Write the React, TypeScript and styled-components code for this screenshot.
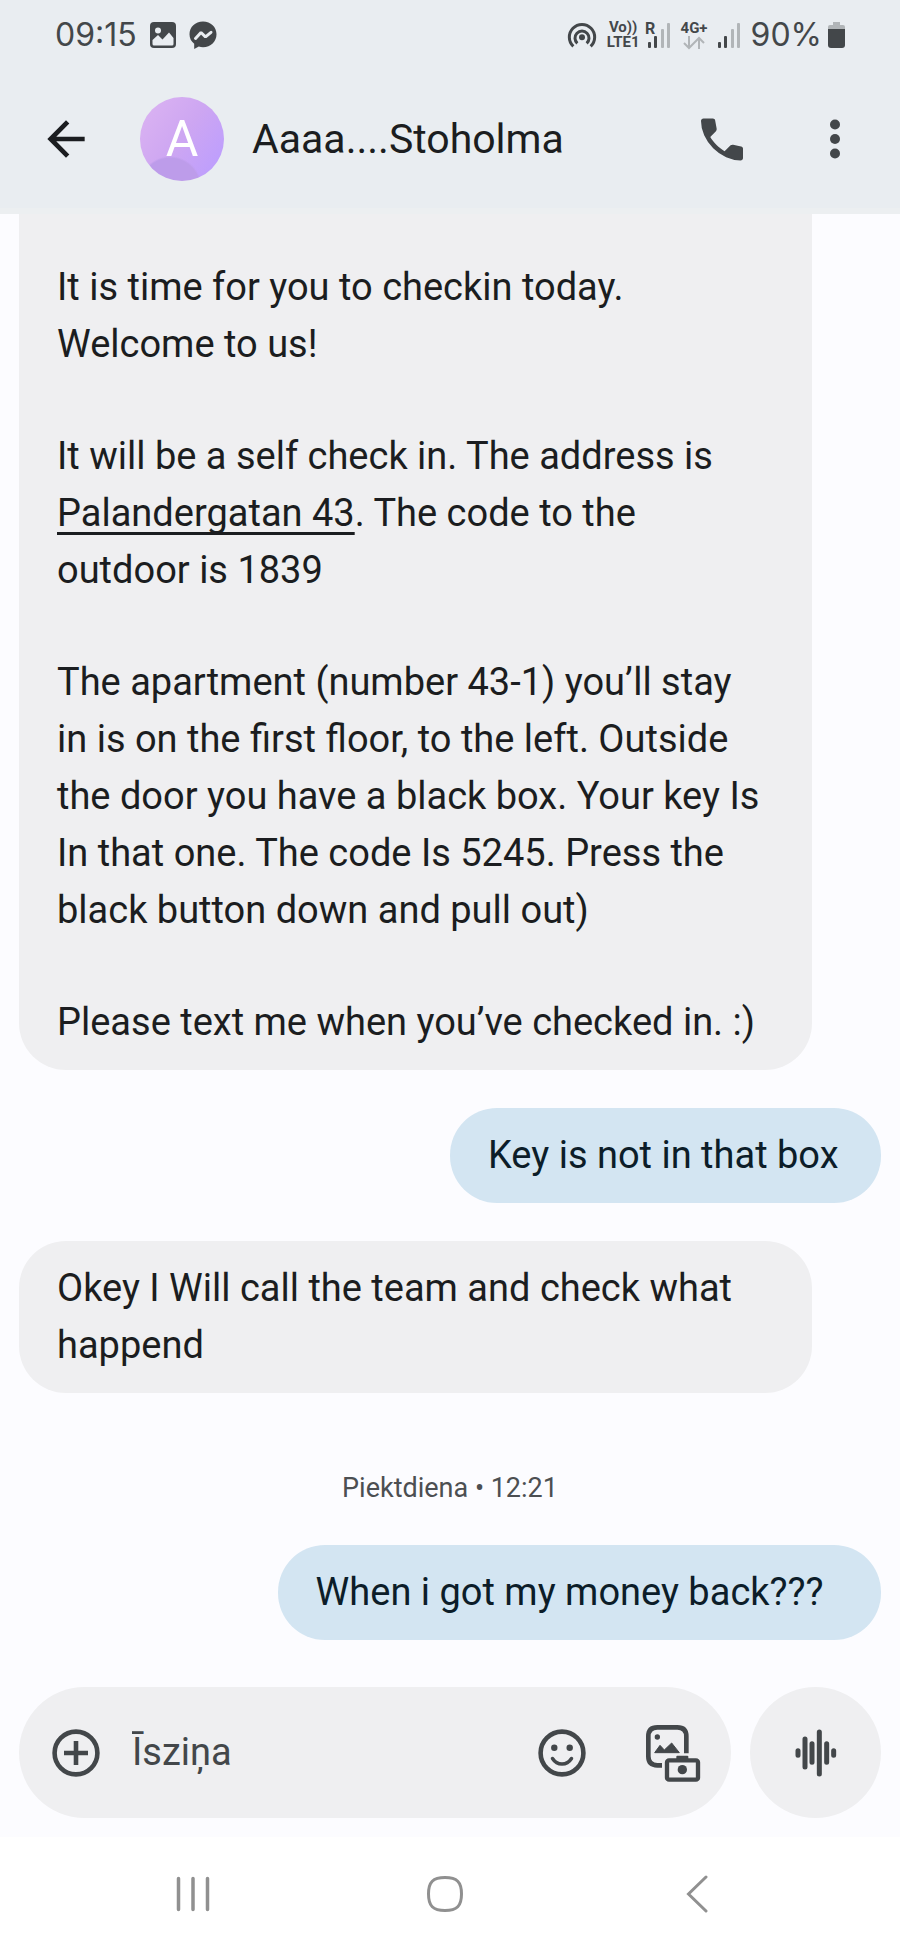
import React from 'react';
import styled, { createGlobalStyle } from 'styled-components';

const ink = '#1b1d20';
const icon = '#43474a';
const faint = '#b1b5b8';
const surface = '#fcfcff';
const bubble = '#efeff1';

const GlobalStyle = createGlobalStyle`
  * {
    box-sizing: border-box;
  }
  body {
    margin: 0;
    background: ${surface};
    color: ${ink};
    font-family: Roboto, 'Noto Sans', sans-serif;
  }
`;

const Screen = styled.div`
  display: flex;
  flex-direction: column;
  min-height: 100vh;
`;

const Header = styled.header`
  background: #e9edf1;
  border-bottom: 6px solid #eceff1;
`;

const StatusBar = styled.div`
  display: flex;
  align-items: center;
  justify-content: space-between;
  height: 70px;
  padding: 0 54px 0 55px;
  color: ${icon};
`;

const StatusGroup = styled.div<{ $gap: number }>`
  display: flex;
  align-items: center;
  gap: ${(p) => p.$gap}px;
`;

const StatusText = styled.span`
  font-family: Inter, Roboto, sans-serif;
  font-size: 32px;
  line-height: 38px;
`;

const Network = styled.div`
  display: flex;
  flex-direction: column;
  align-items: center;
  font-size: 15px;
  font-weight: 700;
  line-height: 15px;
`;

const AppBar = styled.div`
  display: flex;
  align-items: center;
  height: 138px;
  padding: 0 37px 0 38px;
`;

const IconButton = styled.button<{ $size: number }>`
  display: flex;
  align-items: center;
  justify-content: center;
  flex: none;
  width: ${(p) => p.$size}px;
  height: ${(p) => p.$size}px;
  padding: 0;
  border: 0;
  background: none;
  color: ${icon};
`;

const BackButton = styled(IconButton)`
  margin-right: 46px;
  color: ${ink};
`;

const Avatar = styled.div`
  display: flex;
  align-items: center;
  justify-content: center;
  flex: none;
  width: 84px;
  height: 84px;
  border-radius: 50%;
  background:
    radial-gradient(circle at 36% 108%, #bd9cea 0 28%, transparent 30%),
    linear-gradient(125deg, #d8b0f2 15%, #cda6f2 50%, #bf9ffc 85%);
  color: #fff;
  font-size: 50px;
  line-height: 57px;
`;

const Title = styled.h1`
  flex: 1;
  margin: 0 0 0 28px;
  font-size: 41px;
  font-weight: 400;
  line-height: 57px;
`;

const AppActions = styled.div`
  display: flex;
  gap: 57px;
`;

const Thread = styled.main`
  display: flex;
  flex: 1;
  flex-direction: column;
  gap: 38px;
  padding: 0 19px;
`;

const Bubble = styled.div<{ $continued?: boolean }>`
  display: flex;
  flex-direction: column;
  gap: 55px;
  width: calc(100% - 69px);
  padding: ${(p) => (p.$continued ? '45px 38px 19px' : '19px 38px')};
  border-radius: ${(p) => (p.$continued ? '0 0 47px 47px' : '47px')};
  background: ${bubble};
`;

const SentBubble = styled(Bubble)<{ $share: number }>`
  align-self: flex-end;
  width: auto;
  min-width: ${(p) => p.$share}%;
  background: #d3e5f2;
  color: #0c1d29;
`;

const Paragraph = styled.p`
  margin: 0;
  font-size: 38px;
  line-height: 57px;
  white-space: pre-line;
`;

const AddressLink = styled.a`
  color: inherit;
  text-decoration: underline;
  text-decoration-skip-ink: none;
  text-decoration-thickness: 3px;
  text-underline-offset: 6px;
`;

const DateLabel = styled.time`
  margin-top: 38px;
  color: #4c4f52;
  font-size: 27px;
  line-height: 38px;
  text-align: center;
`;

const Composer = styled.form`
  display: flex;
  gap: 19px;
  padding: 45px 19px 19px;
`;

const InputPill = styled.div`
  display: flex;
  align-items: center;
  flex: 1;
  min-width: 0;
  height: 131px;
  padding: 0 28px 0 27px;
  border-radius: 66px;
  background: ${bubble};
`;

const MessageInput = styled.input`
  flex: 1;
  min-width: 0;
  margin: 0 26px;
  padding: 0;
  border: 0;
  outline: 0;
  background: none;
  color: ${ink};
  font: inherit;
  font-size: 38px;
  line-height: 57px;

  &::placeholder {
    color: ${icon};
    opacity: 1;
  }
`;

const InputActions = styled.div`
  display: flex;
  gap: 51px;
`;

const VoiceButton = styled(IconButton)`
  border-radius: 50%;
  background: ${bubble};
`;

const SystemNav = styled.nav`
  display: grid;
  grid-template-columns: repeat(3, 1fr);
  align-items: center;
  justify-items: center;
  height: 113px;
  padding: 0 77px 0 67px;
  background: #fff;
`;

const NavButton = styled(IconButton)`
  color: #909090;
`;

const SignalBars = ({ roaming }: { roaming?: boolean }) => (
  <svg width={27} height={36} viewBox="0 -4 27 36" aria-hidden="true">
    <rect x="4" y="21" width="3" height="6" rx="1" fill={icon} />
    <rect x="10" y="15" width="3" height="12" rx="1" fill={icon} />
    <rect x="17" y="8" width="3" height="19" rx="1" fill={faint} />
    <rect x="23" y="2" width="3" height="25" rx="1" fill={faint} />
    {roaming && (
      <text x="1" y="13" fontSize="16" fontWeight="700" fill={icon}>
        R
      </text>
    )}
  </svg>
);

export default function App() {
  return (
    <Screen>
      <GlobalStyle />
      <Header>
        <StatusBar>
          <StatusGroup $gap={12}>
            <StatusText>09:15</StatusText>
            <svg width={28} height={28} viewBox="0 0 28 28" aria-hidden="true">
              <rect x="1" y="1" width="26" height="26" rx="4" fill={icon} />
              <circle cx="9" cy="9.5" r="3" fill="#e9edf1" />
              <path d="M3.5 19 9 14l4.5 4.5 6.5-7 4.5 5.5V23a1.5 1.5 0 0 1-1.5 1.5H5A1.5 1.5 0 0 1 3.5 23z" fill="#e9edf1" />
            </svg>
            <svg width={28} height={28} viewBox="0 0 28 28" aria-hidden="true">
              <path d="M14 .5C6.2.5.5 6 .5 13.3c0 4 1.7 7.2 4.7 9.5v5.2l4.6-2.4c1.3.4 2.700.6 4.2.6 7.8 0 13.500-5.6 13.500-12.9S21.800.5 14 .5z" fill={icon} />
              <path d="M6.5 17.5 12 11.5l4.5 4.3 5.5-4.5" fill="none" stroke="#e9edf1" strokeWidth="3" strokeLinecap="round" strokeLinejoin="bevel" />
            </svg>
          </StatusGroup>
          <StatusGroup $gap={10}>
            <svg width={30} height={28} viewBox="0 0 90 84" fill="none" stroke={icon} strokeWidth="9" aria-hidden="true">
              <path d="M19 76A38 38 0 1 1 71 76" />
              <path d="M31 67A21 21 0 1 1 59 67" />
              <circle cx="45" cy="49" r="9" fill={icon} stroke="none" />
            </svg>
            <StatusGroup $gap={4}>
              <Network>
                <span>Vo))</span>
                <span>LTE1</span>
              </Network>
              <SignalBars roaming />
            </StatusGroup>
            <StatusGroup $gap={6}>
              <Network>
                <span>4G+</span>
                <svg width={22} height={14} viewBox="0 0 22 14" fill="none" stroke={faint} strokeWidth="2" aria-hidden="true">
                  <path d="M6 0v12M1 7l5 5 5-5M16 13V2M11 7l5-5 5 5" />
                </svg>
              </Network>
              <SignalBars />
            </StatusGroup>
            <StatusGroup $gap={5}>
              <StatusText>90%</StatusText>
              <svg width={19} height={28} viewBox="0 0 19 28" aria-hidden="true">
                <path d="M6 1h7v3h3a2 2 0 0 1 2 2v3H1V6a2 2 0 0 1 2-2h3z" fill={faint} />
                <path d="M1 8h17v16a3 3 0 0 1-3 3H4a3 3 0 0 1-3-3z" fill={icon} />
              </svg>
            </StatusGroup>
          </StatusGroup>
        </StatusBar>
        <AppBar>
          <BackButton $size={56} type="button" aria-label="Back">
            <svg width={56} height={56} viewBox="0 0 24 24" fill="currentColor">
              <path d="M7.825 13l5.6 5.6L12 20l-8-8 8-8 1.425 1.4-5.6 5.6H20v2z" />
            </svg>
          </BackButton>
          <Avatar>A</Avatar>
          <Title>Aaaa....Stoholma</Title>
          <AppActions>
            <IconButton $size={56} type="button" aria-label="Call">
              <svg width={57} height={57} viewBox="0 0 24 24" fill="currentColor">
                <path d="M19.95 21q-3.125 0-6.175-1.363t-5.55-3.862T4.363 10.225 3 4.05q0-.45.3-.75t.75-.3H8.1q.35 0 .625.238t.325.562l.65 3.5q.05.4-.025.675T9.4 8.45L6.975 10.9q.5.925 1.187 1.788t1.513 1.662q.775.775 1.625 1.438T13.1 17l2.35-2.35q.225-.225.588-.338t.712-.062l3.45.7q.35.1.575.363T21 15.9v4.05q0 .45-.3.75t-.75.3z" />
              </svg>
            </IconButton>
            <IconButton $size={56} type="button" aria-label="More options">
              <svg width={10} height={40} viewBox="0 0 10 40" fill="currentColor">
                <circle cx="5" cy="5.5" r="5" />
                <circle cx="5" cy="20" r="5" />
                <circle cx="5" cy="34.5" r="5" />
              </svg>
            </IconButton>
          </AppActions>
        </AppBar>
      </Header>

      <Thread>
        <Bubble $continued>
          <Paragraph>{'It is time for you to checkin today.\nWelcome to us!'}</Paragraph>
          <Paragraph>
            {'It will be a self check in. The address is\n'}
            <AddressLink href="#map">Palandergatan 43</AddressLink>
            {'. The code to the\noutdoor is 1839'}
          </Paragraph>
          <Paragraph>
            {'The apartment (number 43-1) you’ll stay\nin is on the first floor, to the left. Outside\nthe door you have a black box. Your key Is\nIn that one. The code Is 5245. Press the\nblack button down and pull out)'}
          </Paragraph>
          <Paragraph>Please text me when you’ve checked in. :)</Paragraph>
        </Bubble>
        <SentBubble $share={50}>
          <Paragraph>Key is not in that box</Paragraph>
        </SentBubble>
        <Bubble>
          <Paragraph>{'Okey I Will call the team and check what\nhappend'}</Paragraph>
        </Bubble>
        <DateLabel>Piektdiena • 12:21</DateLabel>
        <SentBubble $share={70}>
          <Paragraph>When i got my money back???</Paragraph>
        </SentBubble>
      </Thread>

      <Composer>
        <InputPill>
          <IconButton $size={60} type="button" aria-label="Add">
            <svg width={48} height={48} viewBox="0 0 48 48" fill="none" stroke="currentColor" strokeWidth="4.600">
              <circle cx="24" cy="24" r="21.4" />
              <path d="M24 12v24M12 24h24" />
            </svg>
          </IconButton>
          <MessageInput type="text" placeholder="Īsziņa" aria-label="Īsziņa" />
          <InputActions>
            <IconButton $size={60} type="button" aria-label="Emoji">
              <svg width={48} height={48} viewBox="0 0 48 48" fill="none" stroke="currentColor">
                <circle cx="24" cy="24" r="21.4" strokeWidth="4.600" />
                <circle cx="16.3" cy="18.7" r="3.2" fill="currentColor" stroke="none" />
                <circle cx="31.7" cy="18.7" r="3.2" fill="currentColor" stroke="none" />
                <path d="M14.5 29.5Q18 35 24 35t9.5-5.5" strokeWidth="3.5" strokeLinecap="round" />
              </svg>
            </IconButton>
            <IconButton $size={60} type="button" aria-label="Gallery and camera">
              <svg width={56} height={58} viewBox="0 0 168 174" fill="none" stroke="currentColor">
                <path d="M124 88V37Q124 10 97 10H37Q10 10 10 37V97Q10 124 37 124H51" strokeWidth="14" />
                <circle cx="37" cy="39" r="8" fill="currentColor" stroke="none" />
                <path d="M29 86 45 64 58 78 80 57 103 86z" fill="currentColor" strokeWidth="3" strokeLinejoin="round" />
                <rect x="66" y="109" width="93" height="58" rx="6" strokeWidth="13" />
                <rect x="94" y="95" width="36" height="14" rx="3" fill="currentColor" stroke="none" />
                <circle cx="112" cy="137" r="14" fill="currentColor" stroke="none" />
              </svg>
            </IconButton>
          </InputActions>
        </InputPill>
        <VoiceButton $size={131} type="button" aria-label="Record voice message">
          <svg width={42} height={48} viewBox="0 0 126 144" stroke="currentColor" strokeWidth="15" strokeLinecap="round">
            <path d="M9 65.5v13M30 30v84M51 44v56M73 9v126M95 44v56M116 65.5v13" />
          </svg>
        </VoiceButton>
      </Composer>

      <SystemNav>
        <NavButton $size={60} type="button" aria-label="Recent apps">
          <svg width={36} height={36} viewBox="0 0 36 36" fill="none" stroke="currentColor" strokeWidth="3.5" strokeLinecap="round">
            <path d="M3.5 2.5v31M18 2.5v31M32.5 2.5v31" />
          </svg>
        </NavButton>
        <NavButton $size={60} type="button" aria-label="Home">
          <svg width={38} height={38} viewBox="0 0 38 38" fill="none" stroke="currentColor" strokeWidth="3">
            <path d="M19 2.5C31 2.5 35.5 7 35.5 19S31 35.5 19 35.5 2.5 31 2.5 19 7 2.5 19 2.5z" />
          </svg>
        </NavButton>
        <NavButton $size={60} type="button" aria-label="Back">
          <svg width={22} height={38} viewBox="0 0 22 38" fill="none" stroke="currentColor" strokeWidth="3" strokeLinecap="round">
            <path d="M20 2 2.5 19 20 36" />
          </svg>
        </NavButton>
      </SystemNav>
    </Screen>
  );
}
